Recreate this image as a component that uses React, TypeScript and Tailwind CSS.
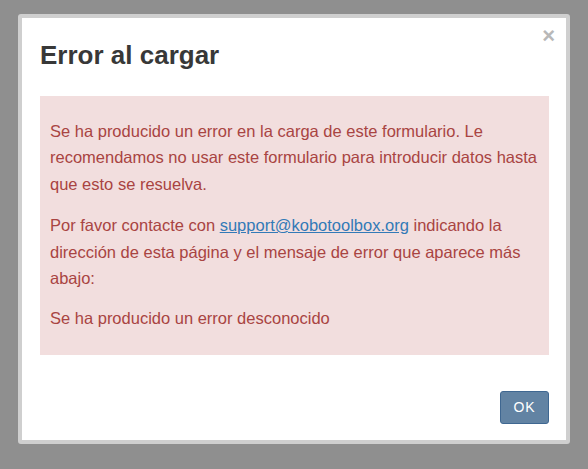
export default function App() {
  return (
    <div className="h-[469px] w-[588px] bg-[#8f8f8f] pl-[18px] pt-[14px] font-['Liberation_Sans',Arial,sans-serif]">
      <div className="relative h-[430px] w-[552px] rounded-[3px] border-4 border-[#cfcfcf] bg-white pl-[18px] pr-[17px] pt-[23px]">
        <button className="absolute right-[11px] top-[7px] text-[22px] font-bold leading-none text-[#b8b8b8]">
          ×
        </button>

        <h1 className="text-[26px] font-bold leading-[1.1] text-[#383838]">
          Error al cargar
        </h1>

        <div className="mt-[26px] bg-[#f2dede] px-[10px] pb-[24px] pt-[22px] text-[16.5px] leading-[26.5px] text-[#a94442]">
          <p>
            Se ha producido un error en la carga de este formulario. Le
            recomendamos no usar este formulario para introducir datos hasta
            que esto se resuelva.
          </p>
          <p className="mt-[15px]">
            Por favor contacte con{" "}
            <a href="#" className="text-[#337ab7] underline">
              support@kobotoolbox.org
            </a>{" "}
            indicando la dirección de esta página y el mensaje de error que
            aparece más abajo:
          </p>
          <p className="mt-[13px]">Se ha producido un error desconocido</p>
        </div>

        <div className="mt-[36px] flex justify-end">
          <button className="h-[33px] w-[49px] rounded-[3px] border border-[#3f6791] bg-[#6283a3] text-[14px] tracking-[1px] text-white">
            OK
          </button>
        </div>
      </div>
    </div>
  );
}
